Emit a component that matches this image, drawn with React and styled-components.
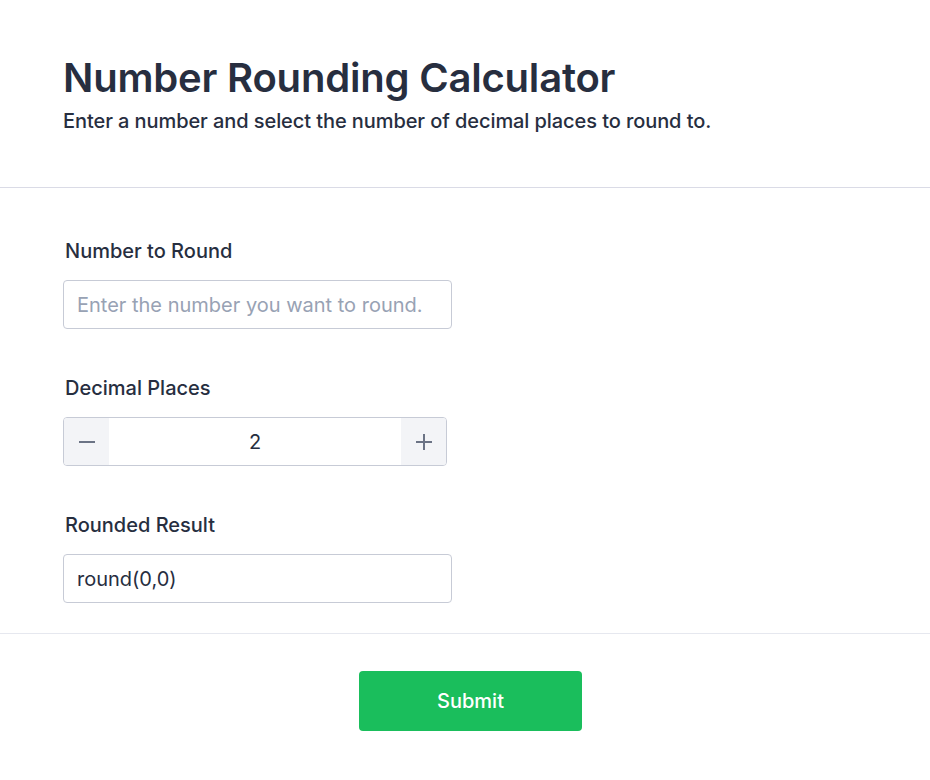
import React, { useState } from 'react';
import styled, { createGlobalStyle } from 'styled-components';

const GlobalStyle = createGlobalStyle`
  body {
    margin: 0;
    background: #ffffff;
    font-family: Inter, "Noto Sans", sans-serif;
    color: #272e3f;
  }
  * { box-sizing: border-box; }
`;

const Page = styled.div`
  width: 930px;
`;

const Header = styled.header`
  padding: 54px 63px 0;
  height: 188px;
  border-bottom: 1px solid #dadbe6;
`;

const Title = styled.h1`
  margin: 0;
  font-size: 40px;
  font-weight: 600;
  line-height: 48px;
  letter-spacing: -0.2px;
  color: #272e3f;
`;

const Subtitle = styled.p`
  margin: 6px 0 0;
  font-size: 20px;
  font-weight: 500;
  line-height: 26px;
  letter-spacing: -0.08px;
  color: #272e3f;
`;

const Body = styled.section`
  padding: 50px 63px 30px;
  display: flex;
  flex-direction: column;
  gap: 46px;
  border-bottom: 1px solid #e6e8ef;
`;

const Field = styled.div`
  display: flex;
  flex-direction: column;
  gap: 16px;
`;

const Label = styled.label`
  padding-left: 2px;
  font-size: 20px;
  font-weight: 500;
  line-height: 26px;
  color: #272e3f;
`;

const TextInput = styled.input`
  width: 389px;
  height: 49px;
  padding: 0 13px;
  border: 1px solid #c7cbd6;
  border-radius: 4px;
  font-family: inherit;
  font-size: 20px;
  color: #272e3f;
  background: #fff;
  outline: none;

  &::placeholder {
    color: #98a2b4;
  }
`;

const Stepper = styled.div`
  width: 384px;
  height: 49px;
  display: flex;
  border: 1px solid #c7cbd6;
  border-radius: 4px;
  overflow: hidden;
`;

const StepButton = styled.button`
  width: 45px;
  flex: none;
  display: flex;
  align-items: center;
  justify-content: center;
  border: none;
  background: #f3f4f7;
  color: #6b7385;
  cursor: pointer;
  padding: 0;
`;

const StepValue = styled.input`
  flex: 1;
  min-width: 0;
  border: none;
  outline: none;
  text-align: center;
  font-family: inherit;
  font-size: 20px;
  color: #272e3f;
  background: #fff;
`;

const Footer = styled.footer`
  display: flex;
  justify-content: center;
  padding: 37px 0 0 11px;
`;

const SubmitButton = styled.button`
  width: 223px;
  height: 60px;
  border: none;
  border-radius: 4px;
  background: #1abe5c;
  color: #ffffff;
  font-family: inherit;
  font-size: 20px;
  font-weight: 500;
  cursor: pointer;
`;

const Minus = () => (
  <svg width="16" height="16" viewBox="0 0 16 16" fill="none">
    <path d="M0 8h16" stroke="currentColor" strokeWidth="2" />
  </svg>
);

const Plus = () => (
  <svg width="16" height="16" viewBox="0 0 16 16" fill="none">
    <path d="M0 8h16M8 0v16" stroke="currentColor" strokeWidth="2" />
  </svg>
);

export default function App() {
  const [num, setNum] = useState('');
  const [places, setPlaces] = useState(2);

  return (
    <Page>
      <GlobalStyle />
      <Header>
        <Title>Number Rounding Calculator</Title>
        <Subtitle>Enter a number and select the number of decimal places to round to.</Subtitle>
      </Header>
      <Body>
        <Field>
          <Label>Number to Round</Label>
          <TextInput
            placeholder="Enter the number you want to round."
            value={num}
            onChange={(e) => setNum(e.target.value)}
          />
        </Field>
        <Field>
          <Label>Decimal Places</Label>
          <Stepper>
            <StepButton onClick={() => setPlaces(Math.max(0, places - 1))}>
              <Minus />
            </StepButton>
            <StepValue value={places} readOnly />
            <StepButton onClick={() => setPlaces(places + 1)}>
              <Plus />
            </StepButton>
          </Stepper>
        </Field>
        <Field>
          <Label>Rounded Result</Label>
          <TextInput value="round(0,0)" readOnly />
        </Field>
      </Body>
      <Footer>
        <SubmitButton>Submit</SubmitButton>
      </Footer>
    </Page>
  );
}
